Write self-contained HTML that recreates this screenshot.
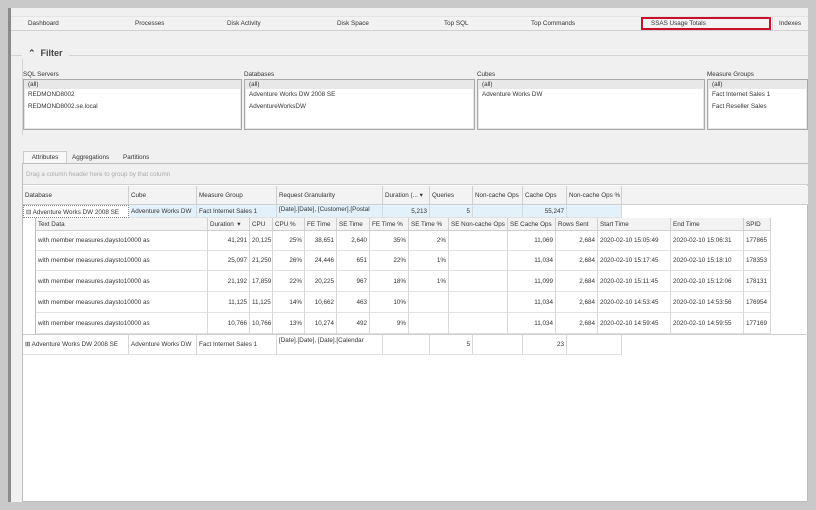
<!DOCTYPE html>
<html><head><meta charset="utf-8"><style>
*{box-sizing:border-box;margin:0;padding:0}
body{width:816px;height:510px;background:#c9c9c9;font-family:"Liberation Sans",sans-serif;font-size:6.3px;color:#333;position:relative;overflow:hidden}
.a{position:absolute;white-space:nowrap;overflow:hidden}
.c{position:absolute;white-space:nowrap;overflow:hidden;border-right:1px solid #d8d8d8;border-bottom:1px solid #e2e2e2;padding:0 2px;line-height:var(--h)}
.r{text-align:right}
.hd{background:#f3f3f3;border-right:1px solid #cfcfcf;border-bottom:1px solid #cfcfcf}
.list{position:absolute;background:#fff;border:1px solid #a9a9a9;box-shadow:inset 0 0 0 1px #e5e5e5}
.list div{height:12px;line-height:12px;padding-left:4px}
.list .s{background:#e8e8e8;height:9px;line-height:9px}
</style></head><body>
<div class="a" style="left:8px;top:8px;width:800px;height:494px;background:#f0f0f0;border-left:3px solid #8a8a8a"></div>
<div class="a" style="left:11px;top:16px;width:797px;height:15px;background:#f2f2f2;border-bottom:1px solid #d0d0d0;border-top:1px solid #e4e4e4"></div>
<div class="a" style="left:28px;top:20px">Dashboard</div>
<div class="a" style="left:135px;top:20px">Processes</div>
<div class="a" style="left:227px;top:20px">Disk Activity</div>
<div class="a" style="left:337px;top:20px">Disk Space</div>
<div class="a" style="left:444px;top:20px">Top SQL</div>
<div class="a" style="left:531px;top:20px">Top Commands</div>
<div class="a" style="left:641px;top:17px;width:130px;height:13px;border:2px solid #c8102e;padding:1px 0 0 8px;line-height:8px">SSAS Usage Totals</div>
<div class="a" style="left:772px;top:17px;width:34px;height:14px;border-left:1px solid #d0d0d0;padding-left:6px;line-height:13px">Indexes</div>
<div class="a" style="left:11px;top:55px;width:797px;height:1px;background:#d4d4d4"></div>
<div class="a" style="left:22px;top:55px;width:1px;height:80px;background:#d4d4d4"></div>
<div class="a" style="left:22px;top:48px;padding:0 6px;background:#f0f0f0;font-size:9px;font-weight:bold;color:#444">&#8963; &nbsp;Filter</div>
<div class="a" style="left:23px;top:71px">SQL Servers</div>
<div class="a" style="left:244px;top:71px">Databases</div>
<div class="a" style="left:477px;top:71px">Cubes</div>
<div class="a" style="left:707px;top:71px">Measure Groups</div>
<div class="list" style="left:23px;top:79px;width:219px;height:51px"><div class="s">(all)</div><div>REDMOND8002</div><div>REDMOND8002.se.local</div></div>
<div class="list" style="left:244px;top:79px;width:231px;height:51px"><div class="s">(all)</div><div>Adventure Works DW 2008 SE</div><div>AdventureWorksDW</div></div>
<div class="list" style="left:477px;top:79px;width:228px;height:51px"><div class="s">(all)</div><div>Adventure Works DW</div></div>
<div class="list" style="left:707px;top:79px;width:101px;height:51px"><div class="s">(all)</div><div>Fact Internet Sales 1</div><div>Fact Reseller Sales</div></div>
<div class="a" style="left:23px;top:151px;width:44px;height:13px;background:#f7f7f7;border:1px solid #ccc;border-bottom:none;text-align:center;line-height:12px">Attributes</div>
<div class="a" style="left:72px;top:154px">Aggregations</div>
<div class="a" style="left:123px;top:154px">Partitions</div>
<div class="a" style="left:22px;top:163px;width:786px;height:339px;background:#fff;border:1px solid #bdbdbd"></div>
<div class="a" style="left:23px;top:164px;width:785px;height:21px;background:#f0f0f0;border-bottom:1px solid #cfcfcf;color:#aaa;padding:7px 0 0 3px">Drag a column header here to group by that column</div>
<div class="a" style="left:23px;top:186px;width:785px;height:19px;background:#f3f3f3;border-bottom:1px solid #cfcfcf"></div>
<div style="--h:19px">
<div class="c hd" style="left:23px;top:186px;width:106px;height:19px">Database</div>
<div class="c hd" style="left:129px;top:186px;width:68px;height:19px">Cube</div>
<div class="c hd" style="left:197px;top:186px;width:80px;height:19px">Measure Group</div>
<div class="c hd" style="left:277px;top:186px;width:106px;height:19px">Request Granularity</div>
<div class="c hd" style="left:383px;top:186px;width:47px;height:19px">Duration (... &#9662;</div>
<div class="c hd" style="left:430px;top:186px;width:43px;height:19px">Queries</div>
<div class="c hd" style="left:473px;top:186px;width:50px;height:19px">Non-cache Ops</div>
<div class="c hd" style="left:523px;top:186px;width:44px;height:19px">Cache Ops</div>
<div class="c hd" style="left:567px;top:186px;width:55px;height:19px">Non-cache Ops %</div>
</div>
<div style="--h:13px">
<div class="a" style="left:129px;top:205px;width:493px;height:13px;background:#e3f1fb"></div>
<div class="c" style="left:23px;top:205px;width:106px;height:13px;border:1px dotted #888">&#8863; Adventure Works DW 2008 SE</div>
<div class="c" style="left:129px;top:205px;width:68px;height:13px">Adventure Works DW</div>
<div class="c" style="left:197px;top:205px;width:80px;height:13px">Fact Internet Sales 1</div>
<div class="c" style="left:277px;top:205px;width:106px;height:13px;line-height:9px">[Date].[Date], [Customer].[Postal</div>
<div class="c r" style="left:383px;top:205px;width:47px;height:13px">5,213</div>
<div class="c r" style="left:430px;top:205px;width:43px;height:13px">5</div>
<div class="c" style="left:473px;top:205px;width:50px;height:13px"></div>
<div class="c r" style="left:523px;top:205px;width:44px;height:13px">55,247</div>
<div class="c" style="left:567px;top:205px;width:55px;height:13px"></div>
</div>
<div class="a" style="left:35px;top:218px;width:736px;height:116px;border-left:1px solid #bbb;border-bottom:1px solid #bbb"></div>
<div style="--h:13px">
<div class="c hd" style="left:36px;top:218px;width:172px;height:13px">Text Data</div>
<div class="c hd" style="left:208px;top:218px;width:42px;height:13px">Duration &nbsp;&#9662;</div>
<div class="c hd" style="left:250px;top:218px;width:23px;height:13px">CPU</div>
<div class="c hd" style="left:273px;top:218px;width:32px;height:13px">CPU %</div>
<div class="c hd" style="left:305px;top:218px;width:32px;height:13px">FE Time</div>
<div class="c hd" style="left:337px;top:218px;width:33px;height:13px">SE Time</div>
<div class="c hd" style="left:370px;top:218px;width:39px;height:13px">FE Time %</div>
<div class="c hd" style="left:409px;top:218px;width:40px;height:13px">SE Time %</div>
<div class="c hd" style="left:449px;top:218px;width:59px;height:13px">SE Non-cache Ops</div>
<div class="c hd" style="left:508px;top:218px;width:48px;height:13px">SE Cache Ops</div>
<div class="c hd" style="left:556px;top:218px;width:42px;height:13px">Rows Sent</div>
<div class="c hd" style="left:598px;top:218px;width:73px;height:13px">Start Time</div>
<div class="c hd" style="left:671px;top:218px;width:73px;height:13px">End Time</div>
<div class="c hd" style="left:744px;top:218px;width:27px;height:13px">SPID</div>
</div>
<div style="--h:20px">
<div class="c" style="left:36px;top:231px;width:172px;height:20px">with member measures.daysto10000 as</div><div class="c r" style="left:208px;top:231px;width:42px;height:20px">41,291</div><div class="c r" style="left:250px;top:231px;width:23px;height:20px">20,125</div><div class="c r" style="left:273px;top:231px;width:32px;height:20px">25%</div><div class="c r" style="left:305px;top:231px;width:32px;height:20px">38,651</div><div class="c r" style="left:337px;top:231px;width:33px;height:20px">2,640</div><div class="c r" style="left:370px;top:231px;width:39px;height:20px">35%</div><div class="c r" style="left:409px;top:231px;width:40px;height:20px">2%</div><div class="c" style="left:449px;top:231px;width:59px;height:20px"></div><div class="c r" style="left:508px;top:231px;width:48px;height:20px">11,069</div><div class="c r" style="left:556px;top:231px;width:42px;height:20px">2,684</div><div class="c" style="left:598px;top:231px;width:73px;height:20px">2020-02-10 15:05:49</div><div class="c" style="left:671px;top:231px;width:73px;height:20px">2020-02-10 15:06:31</div><div class="c" style="left:744px;top:231px;width:27px;height:20px">177865</div>

<div class="c" style="left:36px;top:251px;width:172px;height:20px">with member measures.daysto10000 as</div><div class="c r" style="left:208px;top:251px;width:42px;height:20px">25,097</div><div class="c r" style="left:250px;top:251px;width:23px;height:20px">21,250</div><div class="c r" style="left:273px;top:251px;width:32px;height:20px">26%</div><div class="c r" style="left:305px;top:251px;width:32px;height:20px">24,446</div><div class="c r" style="left:337px;top:251px;width:33px;height:20px">651</div><div class="c r" style="left:370px;top:251px;width:39px;height:20px">22%</div><div class="c r" style="left:409px;top:251px;width:40px;height:20px">1%</div><div class="c" style="left:449px;top:251px;width:59px;height:20px"></div><div class="c r" style="left:508px;top:251px;width:48px;height:20px">11,034</div><div class="c r" style="left:556px;top:251px;width:42px;height:20px">2,684</div><div class="c" style="left:598px;top:251px;width:73px;height:20px">2020-02-10 15:17:45</div><div class="c" style="left:671px;top:251px;width:73px;height:20px">2020-02-10 15:18:10</div><div class="c" style="left:744px;top:251px;width:27px;height:20px">178353</div>

<div class="c" style="left:36px;top:271px;width:172px;height:21px;line-height:21px">with member measures.daysto10000 as</div><div class="c r" style="left:208px;top:271px;width:42px;height:21px;line-height:21px">21,192</div><div class="c r" style="left:250px;top:271px;width:23px;height:21px;line-height:21px">17,859</div><div class="c r" style="left:273px;top:271px;width:32px;height:21px;line-height:21px">22%</div><div class="c r" style="left:305px;top:271px;width:32px;height:21px;line-height:21px">20,225</div><div class="c r" style="left:337px;top:271px;width:33px;height:21px;line-height:21px">967</div><div class="c r" style="left:370px;top:271px;width:39px;height:21px;line-height:21px">18%</div><div class="c r" style="left:409px;top:271px;width:40px;height:21px;line-height:21px">1%</div><div class="c" style="left:449px;top:271px;width:59px;height:21px"></div><div class="c r" style="left:508px;top:271px;width:48px;height:21px;line-height:21px">11,099</div><div class="c r" style="left:556px;top:271px;width:42px;height:21px;line-height:21px">2,684</div><div class="c" style="left:598px;top:271px;width:73px;height:21px;line-height:21px">2020-02-10 15:11:45</div><div class="c" style="left:671px;top:271px;width:73px;height:21px;line-height:21px">2020-02-10 15:12:06</div><div class="c" style="left:744px;top:271px;width:27px;height:21px;line-height:21px">178131</div>

<div class="c" style="left:36px;top:292px;width:172px;height:21px;line-height:21px">with member measures.daysto10000 as</div><div class="c r" style="left:208px;top:292px;width:42px;height:21px;line-height:21px">11,125</div><div class="c r" style="left:250px;top:292px;width:23px;height:21px;line-height:21px">11,125</div><div class="c r" style="left:273px;top:292px;width:32px;height:21px;line-height:21px">14%</div><div class="c r" style="left:305px;top:292px;width:32px;height:21px;line-height:21px">10,662</div><div class="c r" style="left:337px;top:292px;width:33px;height:21px;line-height:21px">463</div><div class="c r" style="left:370px;top:292px;width:39px;height:21px;line-height:21px">10%</div><div class="c" style="left:409px;top:292px;width:40px;height:21px"></div><div class="c" style="left:449px;top:292px;width:59px;height:21px"></div><div class="c r" style="left:508px;top:292px;width:48px;height:21px;line-height:21px">11,034</div><div class="c r" style="left:556px;top:292px;width:42px;height:21px;line-height:21px">2,684</div><div class="c" style="left:598px;top:292px;width:73px;height:21px;line-height:21px">2020-02-10 14:53:45</div><div class="c" style="left:671px;top:292px;width:73px;height:21px;line-height:21px">2020-02-10 14:53:56</div><div class="c" style="left:744px;top:292px;width:27px;height:21px;line-height:21px">176954</div>

<div class="c" style="left:36px;top:313px;width:172px;height:21px;line-height:21px">with member measures.daysto10000 as</div><div class="c r" style="left:208px;top:313px;width:42px;height:21px;line-height:21px">10,766</div><div class="c r" style="left:250px;top:313px;width:23px;height:21px;line-height:21px">10,766</div><div class="c r" style="left:273px;top:313px;width:32px;height:21px;line-height:21px">13%</div><div class="c r" style="left:305px;top:313px;width:32px;height:21px;line-height:21px">10,274</div><div class="c r" style="left:337px;top:313px;width:33px;height:21px;line-height:21px">492</div><div class="c r" style="left:370px;top:313px;width:39px;height:21px;line-height:21px">9%</div><div class="c" style="left:409px;top:313px;width:40px;height:21px"></div><div class="c" style="left:449px;top:313px;width:59px;height:21px"></div><div class="c r" style="left:508px;top:313px;width:48px;height:21px;line-height:21px">11,034</div><div class="c r" style="left:556px;top:313px;width:42px;height:21px;line-height:21px">2,684</div><div class="c" style="left:598px;top:313px;width:73px;height:21px;line-height:21px">2020-02-10 14:59:45</div><div class="c" style="left:671px;top:313px;width:73px;height:21px;line-height:21px">2020-02-10 14:59:55</div><div class="c" style="left:744px;top:313px;width:27px;height:21px;line-height:21px">177169</div>
</div>
<div class="a" style="left:23px;top:334px;width:785px;height:1px;background:#ccc"></div>
<div style="--h:20px">
<div class="c" style="left:23px;top:335px;width:106px;height:20px">&#8862; Adventure Works DW 2008 SE</div>
<div class="c" style="left:129px;top:335px;width:68px;height:20px">Adventure Works DW</div>
<div class="c" style="left:197px;top:335px;width:80px;height:20px">Fact Internet Sales 1</div>
<div class="c" style="left:277px;top:335px;width:106px;height:20px;line-height:12px">[Date].[Date], [Date].[Calendar</div>
<div class="c" style="left:383px;top:335px;width:47px;height:20px"></div>
<div class="c r" style="left:430px;top:335px;width:43px;height:20px">5</div>
<div class="c" style="left:473px;top:335px;width:50px;height:20px"></div>
<div class="c r" style="left:523px;top:335px;width:44px;height:20px">23</div>
<div class="c" style="left:567px;top:335px;width:55px;height:20px"></div>
</div>
</body></html>
